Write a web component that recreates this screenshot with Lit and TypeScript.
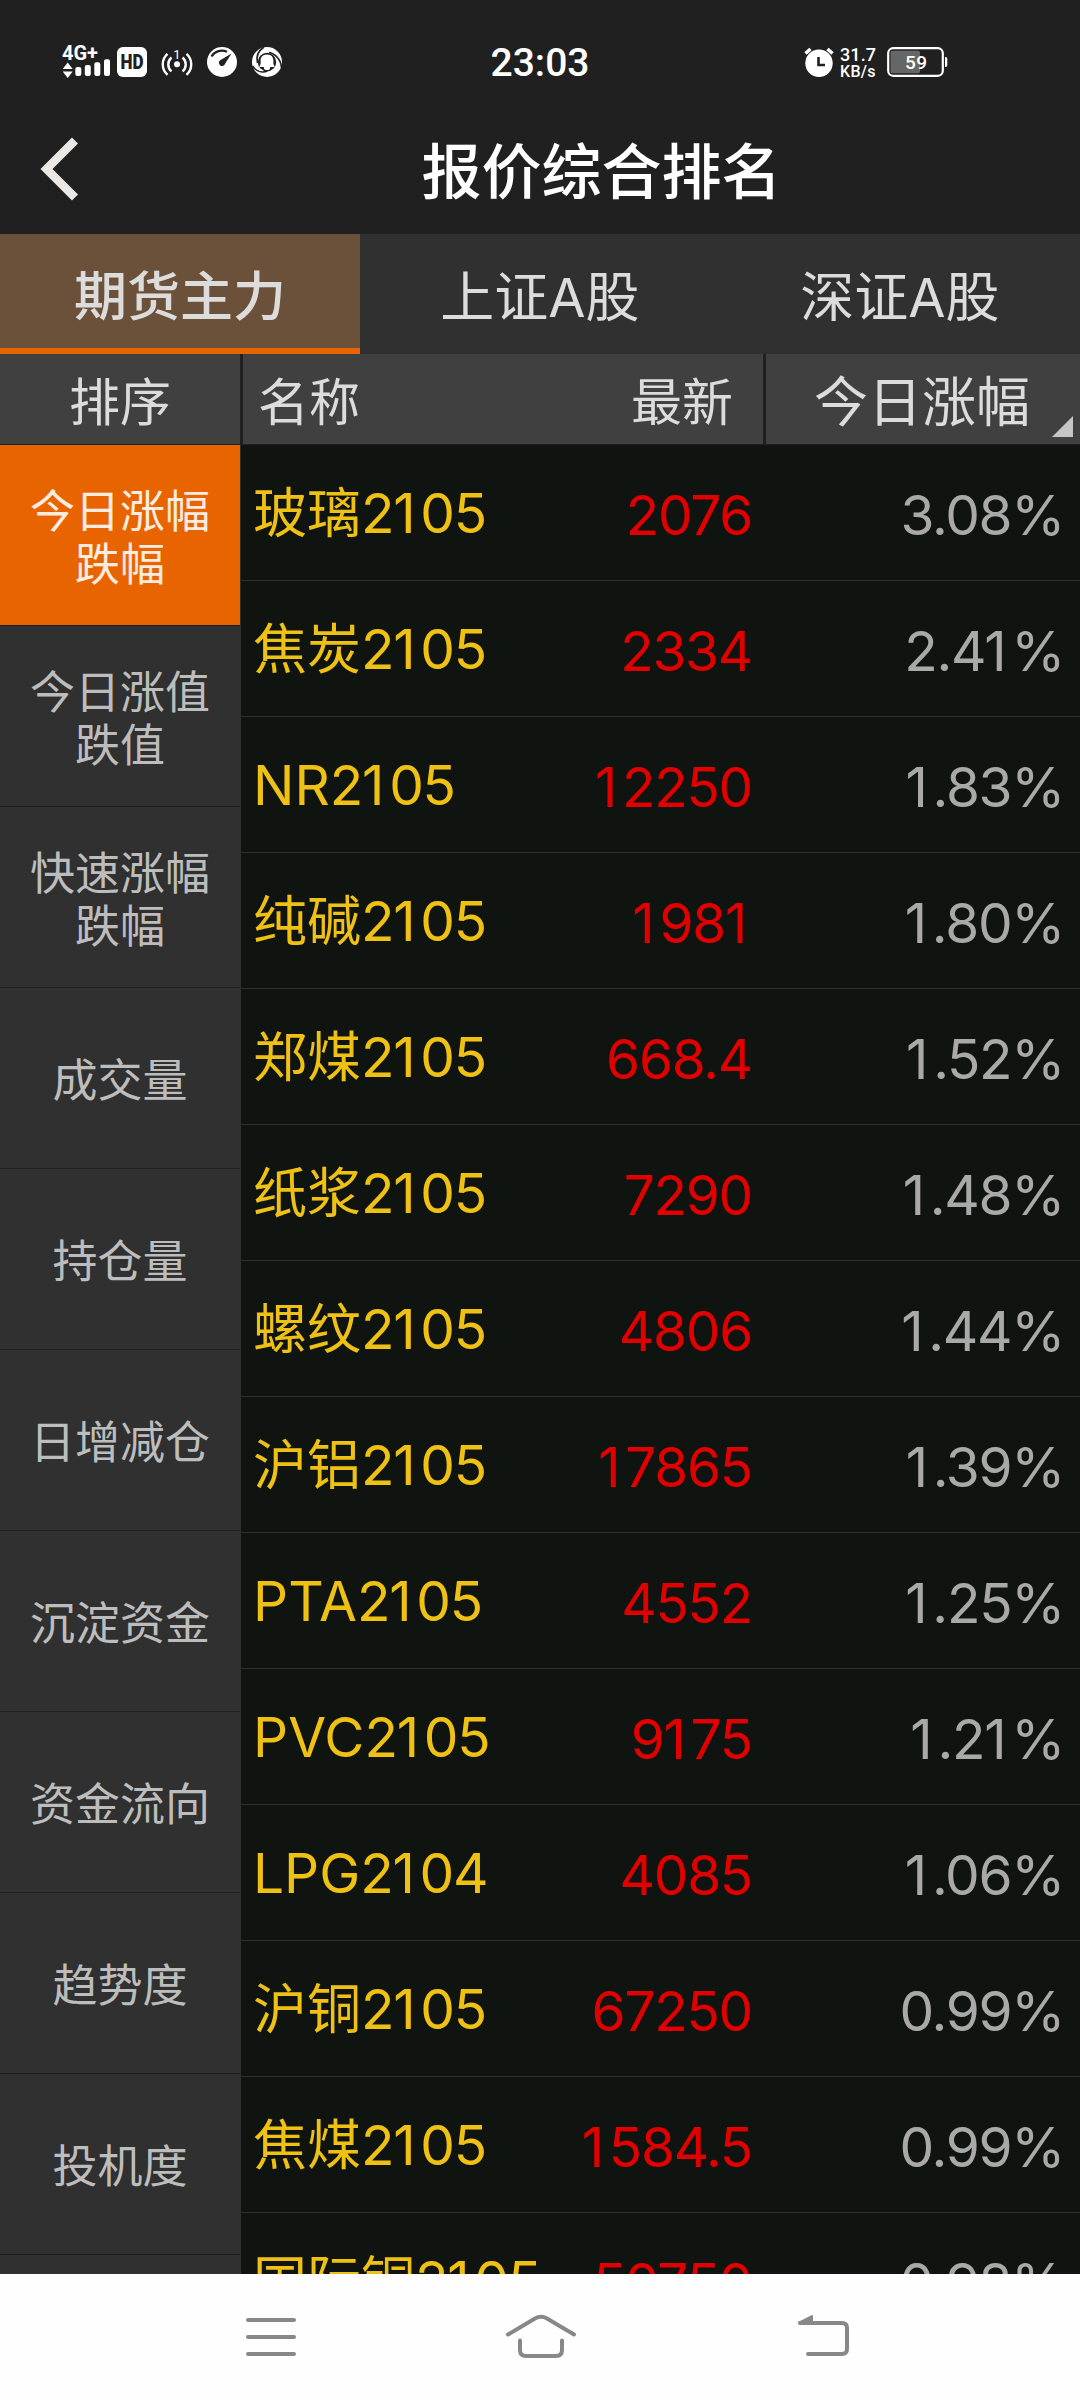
import { LitElement, html, css, svg } from "lit";
import { customElement, property } from "lit/decorators.js";
import { classMap } from "lit/directives/class-map.js";

interface Quote {
  name: string;
  price: string;
  change: string;
}

const TABS = ["期货主力", "上证A股", "深证A股"];

const SORTS: string[][] = [
  ["今日涨幅", "跌幅"],
  ["今日涨值", "跌值"],
  ["快速涨幅", "跌幅"],
  ["成交量"],
  ["持仓量"],
  ["日增减仓"],
  ["沉淀资金"],
  ["资金流向"],
  ["趋势度"],
  ["投机度"],
];

const QUOTES: Quote[] = [
  { name: "玻璃2105", price: "2076", change: "3.08%" },
  { name: "焦炭2105", price: "2334", change: "2.41%" },
  { name: "NR2105", price: "12250", change: "1.83%" },
  { name: "纯碱2105", price: "1981", change: "1.80%" },
  { name: "郑煤2105", price: "668.4", change: "1.52%" },
  { name: "纸浆2105", price: "7290", change: "1.48%" },
  { name: "螺纹2105", price: "4806", change: "1.44%" },
  { name: "沪铝2105", price: "17865", change: "1.39%" },
  { name: "PTA2105", price: "4552", change: "1.25%" },
  { name: "PVC2105", price: "9175", change: "1.21%" },
  { name: "LPG2104", price: "4085", change: "1.06%" },
  { name: "沪铜2105", price: "67250", change: "0.99%" },
  { name: "焦煤2105", price: "1584.5", change: "0.99%" },
  { name: "国际铜2105", price: "50750", change: "0.98%" },
];

const FONT = css`Inter, "Noto Sans CJK SC", sans-serif`;

@customElement("status-bar")
class StatusBar extends LitElement {
  static styles = css`
    :host {
      display: flex;
      height: 102px;
      color: #fff;
      font-family: Roboto, sans-serif;
    }
    svg {
      display: block;
    }
    text {
      fill: #fff;
    }
    .net {
      font-size: 20px;
      font-weight: 700;
    }
    .hd {
      font-size: 20px;
      font-weight: 900;
      fill: #202020;
    }
    .sim {
      font-size: 13px;
    }
    .clock {
      font-size: 39px;
      font-weight: 500;
    }
    .rate {
      font-size: 18px;
      font-weight: 500;
    }
    .unit {
      font-size: 16px;
      font-weight: 500;
    }
    .level {
      font-size: 19px;
      font-weight: 500;
    }
  `;

  render() {
    return html`<svg width="1080" height="102" viewBox="0 0 1080 102">
      ${svg`
      <text class="net" x="62" y="60" textLength="36">4G+</text>
      <g fill="#fff">
        <path d="M62.7 69 L67.7 62.5 L72.7 69 Z M62.7 71.5 L72.7 71.5 L67.7 78 Z"/>
        <rect x="75.3" y="67" width="6" height="9" rx="2"/>
        <rect x="84.8" y="65" width="6" height="11" rx="2"/>
        <rect x="94.3" y="62.3" width="6" height="13.7" rx="2"/>
        <rect x="104" y="59.3" width="6" height="16.7" rx="2"/>
        <rect x="117" y="47" width="30" height="30" rx="6"/>
        <circle cx="177" cy="64.3" r="3"/>
      </g>
      <text class="hd" x="120.5" y="69" textLength="23" lengthAdjust="spacingAndGlyphs">HD</text>
      <text class="sim" x="173.2" y="59">1</text>
      <g fill="none" stroke="#fff" stroke-width="2.4">
        <path d="M171.5 57.5 a9 9 0 0 0 0 13.8 M182.5 57.5 a9 9 0 0 1 0 13.8"/>
        <path d="M167.5 53.8 a14 14 0 0 0 0 21 M186.5 53.8 a14 14 0 0 1 0 21"/>
      </g>
      <circle cx="222" cy="62" r="15" fill="#fff"/>
      <path d="M211.5 56.5 A12 12 0 0 1 227 51.8" fill="none" stroke="#202020" stroke-width="2.2"/>
      <path d="M231.5 53.5 L225.2 63.6 A3.2 3.2 0 1 1 219.8 60.6 Z" fill="#202020"/>
      <circle cx="267" cy="62" r="15" fill="#fff"/>
      <circle cx="267" cy="62" r="9.2" fill="#202020"/>
      <g fill="none" stroke="#202020" stroke-width="1.6">
        <path d="M252.5 66 C256 71.5 262 73 267.5 71"/>
        <path d="M264 47 C258 51 256 57 257.5 63"/>
        <path d="M281.5 68 C281 60 276 54 269 52.5"/>
      </g>
      <path d="M267 54.5 c-4.4 0 -6.4 2.8 -6.4 6 v3.6 l-1.4 2.8 h4.6 a3.2 3.2 0 0 0 6.4 0 h4.6 l-1.4 -2.8 v-3.6 c0 -3.2 -2 -6 -6.4 -6 Z" fill="#fff"/>
      <text class="clock" x="490.5" y="76" textLength="99">23:03</text>
      <circle cx="819" cy="63.3" r="13.7" fill="#fff"/>
      <path d="M805.5 53.5 L810.5 49 M832.5 53.5 L827.5 49" stroke="#fff" stroke-width="3.6"/>
      <path d="M818.5 57 V65 H825" fill="none" stroke="#202020" stroke-width="2.6"/>
      <text class="rate" x="840" y="60.7" textLength="36">31.7</text>
      <text class="unit" x="840" y="76.8" textLength="35.5">KB/s</text>
      <rect x="888.2" y="48.2" width="54.6" height="27.6" rx="5" fill="none" stroke="#fff" stroke-width="2.2"/>
      <rect x="890.5" y="50.8" width="29.5" height="22.4" rx="2" fill="#666"/>
      <path d="M945 57 h0.5 q1.8 0 1.8 2 v6 q0 2 -1.8 2 h-0.5 Z" fill="#fff"/>
      <text class="level" x="905" y="68.8" textLength="22">59</text>
      `}
    </svg>`;
  }
}

@customElement("sort-list")
class SortList extends LitElement {
  static styles = css`
    :host {
      display: block;
      width: 240px;
      flex: none;
      background: #303030;
      border-right: 1px solid #303030;
      font-family: ${FONT};
    }
    .item {
      display: flex;
      flex-direction: column;
      justify-content: center;
      align-items: center;
      box-sizing: border-box;
      height: 181px;
      padding-top: 5px;
      border-bottom: 1px solid #202020;
      font-size: 45px;
      line-height: 53px;
      color: #bdbdbd;
    }
    .active {
      background: #e86400;
      color: #ffece0;
    }
  `;

  render() {
    return SORTS.map(
      (lines, i) => html`<div class=${classMap({ item: true, active: i === 0 })}>
        ${lines.map((line) => html`<span>${line}</span>`)}
      </div>`,
    );
  }
}

// Narrow "1" glyphs get extra room on the right so columns of figures line up.
const figures = (text: string) =>
  text.split(/(1)/).map((part) => (part === "1" ? html`<span class="one">1</span>` : part));

@customElement("quote-row")
class QuoteRow extends LitElement {
  @property({ attribute: false }) quote!: Quote;

  static styles = css`
    :host {
      display: flex;
      height: 135px;
      border-bottom: 1px solid #303030;
      font-family: ${FONT};
      font-size: 55px;
      line-height: 135px;
      white-space: nowrap;
    }
    .name {
      flex: none;
      width: 230px;
      padding: 1px 0 0 12px;
      color: #efc114;
    }
    .han {
      font-size: 54px;
    }
    .digits {
      letter-spacing: -1.3px;
    }
    .one {
      margin-right: 6px;
    }
    .price {
      flex: none;
      width: 269px;
      text-align: right;
      padding-top: 3px;
      color: #e10000;
    }
    .change {
      flex: 1;
      text-align: right;
      padding: 3px 16px 0 0;
      color: #a9a9a9;
    }
  `;

  render() {
    const [, han, letters, code] = this.quote.name.match(/^([^\x00-\x7f]*)([A-Z]*)(\d*)$/)!;
    return html`<div class="name"><span class="han">${han}</span>${letters}<span class="digits">${figures(code)}</span></div>
      <div class="price digits">${figures(this.quote.price)}</div>
      <div class="change digits">${figures(this.quote.change)}</div>`;
  }
}

@customElement("app-root")
class AppRoot extends LitElement {
  static styles = css`
    :host {
      display: flex;
      flex-direction: column;
      width: 1080px;
      height: 2400px;
      overflow: hidden;
      background: #202020;
      font-family: ${FONT};
    }
    .title {
      display: flex;
      align-items: center;
      height: 132px;
      color: #fff;
    }
    .back {
      width: 83px;
      padding-left: 40px;
      flex: none;
    }
    .back svg {
      display: block;
      margin-top: 2px;
    }
    .title h1 {
      flex: 1;
      margin: 0;
      padding-top: 7px;
      text-align: center;
      font-size: 60px;
      font-weight: 500;
      line-height: 88px;
    }
    .tabs {
      display: grid;
      grid-template-columns: repeat(3, 1fr);
      height: 120px;
      background: #303030;
      color: #dcdcdc;
      font-size: 54px;
      line-height: 127px;
      text-align: center;
    }
    .tab {
      height: 120px;
      box-sizing: border-box;
    }
    .tab.active {
      background: #6b503a;
      border-bottom: 6px solid #e86400;
      font-weight: 500;
      font-size: 53px;
    }
    .head {
      display: flex;
      height: 90px;
      border-bottom: 1px solid #202020;
      background: #404040;
      color: #dcdcdc;
      font-size: 51px;
      line-height: 97px;
    }
    .sort {
      width: 240px;
      text-align: center;
      border-right: 3px solid #202020;
    }
    .cols {
      display: flex;
      justify-content: space-between;
      width: 475px;
      padding: 0 30px 0 15px;
      border-right: 3px solid #202020;
    }
    .metric {
      position: relative;
      flex: 1;
      padding-right: 2px;
      text-align: center;
      font-size: 54px;
    }
    .corner {
      position: absolute;
      right: 7px;
      bottom: 7px;
    }
    .body {
      display: flex;
      height: 1829px;
      overflow: hidden;
    }
    .quotes {
      flex: 1;
      background: #0f1410;
    }
    .nav {
      display: flex;
      height: 126px;
      background: #fefefe;
    }
  `;

  render() {
    return html`
      <status-bar></status-bar>
      <div class="title">
        <div class="back">
          <svg width="40" height="64" viewBox="0 0 40 64">
            <path d="M35 3.5 L6.5 32 L35 60.5" fill="none" stroke="#ebe7e5" stroke-width="8.5" />
          </svg>
        </div>
        <h1>报价综合排名</h1>
      </div>
      <div class="tabs">
        ${TABS.map((t, i) => html`<div class=${classMap({ tab: true, active: i === 0 })}>${t}</div>`)}
      </div>
      <div class="head">
        <div class="sort">排序</div>
        <div class="cols"><span>名称</span><span>最新</span></div>
        <div class="metric">
          今日涨幅
          <svg class="corner" width="21" height="21" viewBox="0 0 21 21">
            <path d="M21 0 V21 H0 Z" fill="#c6c6c6" />
          </svg>
        </div>
      </div>
      <div class="body">
        <sort-list></sort-list>
        <div class="quotes">${QUOTES.map((q) => html`<quote-row .quote=${q}></quote-row>`)}</div>
      </div>
      <div class="nav">
        <svg width="1080" height="126" viewBox="0 0 1080 126">
          <g fill="none" stroke="#888" stroke-width="4" stroke-linecap="round" stroke-linejoin="round">
            <path d="M248 46 H294 M248 63 H294 M248 80 H294" />
            <path d="M508 60.5 L535 44.5 Q541 41 547 44.5 L574 60.5" />
            <path d="M520 66.5 V76 Q520 82 526 82 H556 Q562 82 562 76 V66.5" />
            <path d="M800 49 H842 Q847 49 847 54 V75 Q847 80 842 80 H808" />
          </g>
          <path d="M798 48 L812 41 Q813 41 813 42 V50 H799 Z" fill="#888" />
        </svg>
      </div>
    `;
  }
}
